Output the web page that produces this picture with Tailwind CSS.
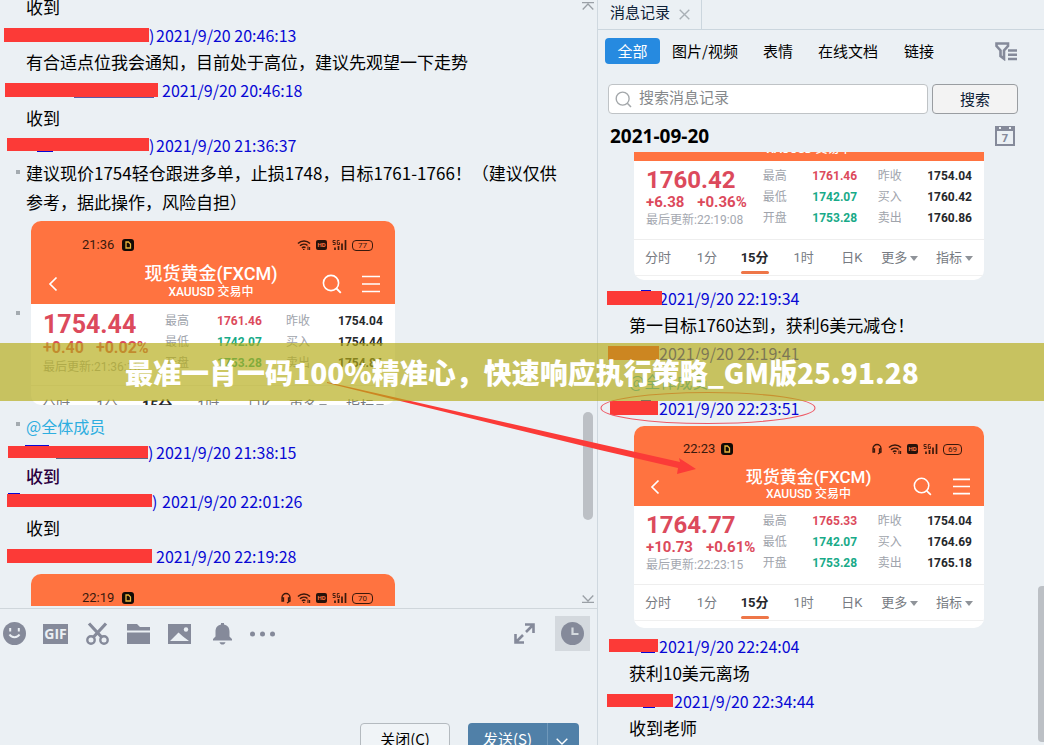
<!DOCTYPE html>
<html lang="zh-CN">
<head>
<meta charset="utf-8">
<meta name="viewport" content="width=device-width, initial-scale=1">
<title>消息记录</title>
<script src="https://cdn.jsdelivr.net/npm/@tailwindcss/browser@4"></script>
</head>
<body class="relative h-screen overflow-hidden bg-[#ebf0f4] font-['Noto_Sans_CJK_SC',sans-serif] text-black [text-spacing-trim:space-all]">

<svg class="hidden" aria-hidden="true">
  <symbol id="app" viewBox="0 0 12 12"><rect width="12" height="12" rx="3" fill="#120a05"/><path d="M4 3h2.500L8.500 5v4H4z" fill="none" stroke="#e8b43c" stroke-width="1.300"/></symbol>
  <symbol id="headset" viewBox="0 0 12 12"><path d="M2 9V5.500a4 4 0 0 1 8 0V9M2 6v3h1.500V6zM10 6v3H8.500V6zM9.500 9.500 7 11" fill="none" stroke="#3a190c" stroke-width="1.300"/></symbol>
  <symbol id="wifi" viewBox="0 0 14 12"><path d="M1 4.500a8.500 8.500 0 0 1 12 0M3 6.800a5.600 5.600 0 0 1 7.500-.3M5 9a3 3 0 0 1 3.500-.4" fill="none" stroke="#3a190c" stroke-width="1.600"/><path d="M6 10.500h1.500M11 7.500v3.500M12.600 8v3" stroke="#3a190c" stroke-width="1.100"/></symbol>
  <symbol id="signal" viewBox="0 0 15 12"><path d="M3 11V8.500M6.500 11V7M10 11V4.500M13.500 11V1" fill="none" stroke="#3a190c" stroke-width="1.700"/><path d="M3.500 1.500H1v2h2.200v2H.8M7.500 1.500H5.300v4h2.200V3.700H6.500" fill="none" stroke="#3a190c" stroke-width=".9"/></symbol>
  <symbol id="back" viewBox="0 0 10 16"><path d="M8.500 1.500 2 8l6.500 6.500" fill="none" stroke="#fff" stroke-width="1.700"/></symbol>
  <symbol id="find" viewBox="0 0 20 20"><circle cx="9" cy="9" r="7.600" fill="none" stroke="currentColor" stroke-width="1.600"/><path d="m14.500 14.500 4.300 4.300" stroke="currentColor" stroke-width="1.800"/></symbol>
  <symbol id="menu" viewBox="0 0 18 18"><path d="M0 1.500h18M0 9h18M0 16.500h18" stroke="#fff" stroke-width="1.700"/></symbol>
  <symbol id="caret" viewBox="0 0 8 5"><path d="M0 0h8L4 5z" fill="#8f9399"/></symbol>
</svg>

<div class="grid h-full grid-cols-[597fr_447fr]">

  <!-- Conversation -->
  <main class="flex h-screen min-w-0 flex-col overflow-hidden">
    <div class="flex min-h-0 flex-1 overflow-hidden border-b border-[#cfd6db]">
      <div class="mb-0.5 min-w-0 flex-1 overflow-hidden whitespace-nowrap text-[17px]">
        <p class="flex h-[21px] items-end pl-[26px] leading-[29px]">收到</p>

        <div class="flex h-[27px] items-center text-base text-[#0808d4]">
          <div class="flex w-[156px] shrink-0 items-center pl-1"><span class="h-3.5 w-[145px] bg-[#fc3a37]"></span><span>)</span></div><time>2021/9/20 20:46:13</time>
        </div>
        <p class="pl-[26px] leading-7">有合适点位我会通知，目前处于高位，建议先观望一下走势</p>

        <div class="flex h-7 items-center text-base text-[#0808d4]">
          <div class="flex w-[162px] shrink-0 items-center pl-[5px]"><span class="relative h-3.5 w-[153px] bg-[#fc3a37]"><i class="absolute top-full right-1 h-px w-20 bg-[#5a5aa8]"></i></span></div><time>2021/9/20 20:46:18</time>
        </div>
        <p class="pl-[26px] leading-[27px]">收到</p>

        <div class="flex h-[27px] items-center text-base text-[#0808d4]">
          <div class="flex w-[156px] shrink-0 items-center pl-[7px]"><span class="relative h-[13px] w-[142px] bg-[#fc3a37]"><i class="absolute top-full left-[30px] h-px w-4 bg-[#0808d4]"></i></span><span>)</span></div><time>2021/9/20 21:36:37</time>
        </div>
        <p class="relative pl-[26px] leading-[29px]"><i class="absolute top-3 left-4 size-1 bg-[#a4abb0]"></i>建议现价1754轻仓跟进多单，止损1748，目标1761-1766！（建议仅供<br>参考，据此操作，风险自担）</p>

        <!-- Quote card 21:36 -->
        <div class="relative mt-[5px] pl-[31px]">
          <i class="absolute top-[90px] left-4 size-1 bg-[#a4abb0]"></i>
          <article class="h-[184px] w-[364px] overflow-hidden rounded-[10px] bg-white font-[Roboto,'Noto_Sans_CJK_SC',sans-serif]">
            <header class="h-[83px] bg-[#ff7340] pt-4 text-white">
              <div class="flex h-4 items-center gap-[5px] pr-[22px] pl-[51px] text-[13px] text-[#3a190c]">
                <span class="mr-[3px]">21:36</span><svg class="size-3"><use href="#app"/></svg>
                <svg class="ml-auto h-3 w-3.5"><use href="#wifi"/></svg><b class="h-2.5 w-[11px] rounded-[2px] bg-[#26120a] text-center text-[6px] leading-[10px] text-[#ff7340]">HD</b><svg class="h-3 w-[15px]"><use href="#signal"/></svg><span class="rounded border border-[#3a190c] px-[5px] text-[8px] leading-[9px]">77</span>
              </div>
              <div class="flex items-center pt-2 pr-[15px] pl-[17px]">
                <svg class="mt-1.5 h-4 w-2.5"><use href="#back"/></svg>
                <div class="min-w-0 flex-1 pt-0.5 pl-[62px] text-center font-medium"><h3 class="text-lg leading-[22px]">现货黄金(FXCM)</h3><p class="text-xs leading-[15px]">XAUUSD 交易中</p></div>
                <svg class="mt-1.5 mr-5 ml-5 size-5"><use href="#find"/></svg><svg class="mt-1.5 h-[18px] w-[18px]"><use href="#menu"/></svg>
              </div>
            </header>
            <div class="grid h-[82px] grid-cols-[122fr_52fr_69fr_52fr_45fr] border-b border-[#eeeeee] px-3 pt-[7px]">
              <div class="text-[#dc4a5c]"><p class="text-[25px] leading-7 font-bold">1754.44</p><p class="flex gap-3 text-base leading-[18px] font-bold"><span>+0.40</span><span>+0.02%</span></p><p class="text-xs leading-5 text-[#a4a8b0]">最后更新:21:36:15</p></div>
              <div class="text-xs leading-[21px] text-[#a0a4ac]"><p>最高</p><p>最低</p><p>开盘</p></div>
              <div class="text-xs leading-[21px] font-bold text-[#18aa88]"><p class="text-[#dc4a5c]">1761.46</p><p>1742.07</p><p>1753.28</p></div>
              <div class="text-xs leading-[21px] text-[#a0a4ac]"><p>昨收</p><p>买入</p><p>卖出</p></div>
              <div class="text-xs leading-[21px] font-bold text-[#26282c]"><p>1754.04</p><p>1754.44</p><p>1754.86</p></div>
            </div>
            <div class="grid h-10 grid-cols-[52fr_44fr_53fr_48fr_40fr_43fr_48fr] px-[11px] text-sm leading-10 text-[#777b82]">
              <span>分时</span><span>1分</span><b class="text-[#26282c]">15分</b><span>1时</span><span>日K</span><span class="flex items-center gap-0.5">更多<svg class="h-[5px] w-2"><use href="#caret"/></svg></span><span class="flex items-center gap-0.5 pl-3">指标<svg class="h-[5px] w-2"><use href="#caret"/></svg></span>
            </div>
          </article>
        </div>

        <p class="relative mt-2 pl-[26px] text-base leading-[27px] text-[#2eaee0]"><i class="absolute top-[9px] left-4 size-1 bg-[#a4abb0]"></i>@全体成员</p>
        <div class="flex h-6 items-center text-base text-[#0808d4]">
          <div class="flex w-[156px] shrink-0 items-center pl-2"><span class="relative h-3 w-[140px] bg-[#fc3a37]"><i class="absolute bottom-full left-[17px] h-px w-6 bg-[#0808d4]"></i><i class="absolute top-full right-0 h-px w-[92px] bg-[#5a6a88]"></i></span><span>)</span></div><time>2021/9/20 21:38:15</time>
        </div>
        <p class="pl-[26px] leading-6 font-medium text-[#2b0040]">收到</p>
        <div class="flex h-[25px] items-center text-base text-[#0808d4]">
          <div class="flex w-[162px] shrink-0 items-center pl-[7px]"><span class="relative h-[13px] w-[145px] bg-[#fc3a37]"><i class="absolute bottom-full left-px h-px w-3 bg-[#0808d4]"></i></span><span>)</span></div><time>2021/9/20 22:01:26</time>
        </div>
        <p class="pl-[26px] leading-[29px]">收到</p>
        <div class="flex h-[27px] items-center text-base text-[#0808d4]">
          <div class="flex w-[156px] shrink-0 items-center pl-[7px]"><span class="h-3.5 w-[145px] bg-[#fc3a37]"></span></div><time>2021/9/20 22:19:28</time>
        </div>

        <!-- Quote card 22:19 -->
        <article class="mt-[5px] ml-[31px] h-[83px] w-[364px] rounded-t-[10px] bg-[#ff7340] pt-4 font-[Roboto,sans-serif]">
          <div class="flex h-4 items-center gap-[5px] pr-[22px] pl-[51px] text-[13px] text-[#3a190c]">
            <span class="mr-[3px]">22:19</span><svg class="size-3"><use href="#app"/></svg>
            <svg class="ml-auto size-3"><use href="#headset"/></svg><svg class="h-3 w-3.5"><use href="#wifi"/></svg><b class="h-2.5 w-[11px] rounded-[2px] bg-[#26120a] text-center text-[6px] leading-[10px] text-[#ff7340]">HD</b><svg class="h-3 w-[15px]"><use href="#signal"/></svg><span class="rounded border border-[#3a190c] px-[5px] text-[8px] leading-[9px]">70</span>
          </div>
        </article>
      </div>

      <div class="mr-[3px] flex w-3 shrink-0 flex-col items-center pt-0.5 pb-[5px]">
        <svg class="h-2 w-3 shrink-0" viewBox="0 0 12 8" fill="none" stroke="#9aa0a6" stroke-width="1.300"><path d="M0 .7h12M.7 7.500 6 2l5.300 5.500"/></svg>
        <div class="flex-[402]"></div>
        <div class="w-2.5 flex-[108] rounded-[5px] bg-[#bcc0c5]"></div>
        <div class="flex-[75]"></div>
        <svg class="h-2 w-3 shrink-0" viewBox="0 0 12 8" fill="none" stroke="#9aa0a6" stroke-width="1.300"><path d="M0 7.300h12M.7.500 6 6 11.300.5"/></svg>
      </div>
    </div>

    <div class="flex h-[136px] shrink-0 flex-col">
      <div class="flex items-center pt-[7px] pr-[7px] pl-[3px] text-[#858a9a]">
        <button aria-label="表情" class="mr-[17px]"><svg class="size-[23px]" viewBox="0 0 23 23"><circle cx="11.500" cy="11.500" r="11.500" fill="currentColor"/><path d="M7.200 6v3.500M15.800 6v3.500M6.500 12.500c2 3.500 8 3.500 10 0" fill="none" stroke="#ebf0f4" stroke-width="2"/></svg></button>
        <button aria-label="GIF" class="mr-[18px] h-5 w-[25px] bg-[#858a9a] font-['Liberation_Sans_Narrow','Open_Sans',sans-serif] text-[14px] leading-5 font-bold text-[#ebf0f4]">GIF</button>
        <button aria-label="截图" class="mr-[18px]"><svg class="size-[23px]" viewBox="0 0 23 23" fill="none" stroke="currentColor"><circle cx="5" cy="18" r="3.700" stroke-width="2.400"/><circle cx="18" cy="18" r="3.700" stroke-width="2.400"/><path d="M3 1.500 15.500 15M20 1.500 7.500 15" stroke-width="3.200"/></svg></button>
        <button aria-label="文件" class="mr-[18px]"><svg class="h-5 w-[23px]" viewBox="0 0 23 20" fill="currentColor"><path d="M0 0h10l3 3h10v3.500H0zM0 8.500h23V20H0z"/></svg></button>
        <button aria-label="图片" class="mr-[22px]"><svg class="h-5 w-[23px]" viewBox="0 0 23 20"><path d="M0 0h23v20H0z" fill="currentColor"/><path d="m2 17 8.500-8.500 4.500 4 6 4.500z" fill="#ebf0f4"/><circle cx="18" cy="5.500" r="2.200" fill="#ebf0f4"/></svg></button>
        <button aria-label="提醒" class="mr-[18px]"><svg class="h-[23px] w-[19px]" viewBox="0 0 19 23" fill="currentColor"><path d="M8 1h3v1.500c4 .8 5.500 3.500 5.500 7.500v4.500L19 17v1.500H0V17l2.500-2.500V10C2.500 6 4 3.300 8 2.500zM6.500 20.200h6c-.8 3.200-5.200 3.200-6 0z"/></svg></button>
        <button aria-label="更多"><svg class="h-1.5 w-[25px]" viewBox="0 0 25 6" fill="currentColor"><circle cx="2.500" cy="3" r="2.500"/><circle cx="12.500" cy="3" r="2.500"/><circle cx="22.500" cy="3" r="2.500"/></svg></button>
        <button aria-label="展开" class="mr-5 ml-auto"><svg class="size-[21px]" viewBox="0 0 21 21" fill="none" stroke="currentColor" stroke-width="2.600"><path d="M11 1.500h8.500V10M19.500 1.500 12 9M1.500 11v8.500H10M1.500 19.500 9 12"/></svg></button>
        <button aria-label="历史" class="flex size-[35px] items-center justify-center bg-[#d4d9de]"><svg class="size-[23px]" viewBox="0 0 23 23"><circle cx="11.500" cy="11.500" r="11.500" fill="currentColor"/><path d="M11.500 5.500V12h6" fill="none" stroke="#d4d9de" stroke-width="2.200"/></svg></button>
      </div>
      <div class="mt-[72px] flex justify-end gap-[18px] pr-[18px] text-[15px]">
        <button class="h-8 w-[90px] rounded-sm border border-[#b4babf] bg-[#f0f4f7]">关闭(C)</button>
        <button class="flex h-8 w-[111px] items-center rounded-sm bg-[#5080a8] text-white"><span class="flex-1 text-center">发送(S)</span><span class="flex w-8 items-center justify-center self-stretch border-l border-[#6f98ba] pr-1"><svg class="mt-1 h-[7px] w-3" viewBox="0 0 12 7" fill="none" stroke="#fff" stroke-width="1.400"><path d="m.7.700 5.300 5.300L11.300.7"/></svg></span></button>
      </div>
    </div>
  </main>

  <!-- Message history -->
  <aside class="flex h-screen min-w-0 flex-col overflow-hidden border-l border-[#cfd8df] whitespace-nowrap">
    <div class="flex h-[30px] shrink-0 border-b border-[#cbd6de] text-[15px]">
      <div class="flex w-[104px] items-center gap-[9px] border-r border-[#cbd6de] pl-3"><span class="pb-[5px] leading-6 text-[#0d2036]">消息记录</span><button aria-label="关闭"><svg class="size-[11px]" viewBox="0 0 11 11" stroke="#a9b0b6" stroke-width="1.400"><path d="m.7.700 9.600 9.600M10.300.7.700 10.300"/></svg></button></div>
    </div>
    <nav class="mt-2 flex h-[26px] shrink-0 items-center pr-[27px] pl-[7px] text-[15px]">
      <button class="mr-3 h-[26px] w-[55px] rounded-sm bg-[#268ae0] text-white">全部</button>
      <button class="mr-[25px]">图片/视频</button><button class="mr-[25px]">表情</button><button class="mr-[26px]">在线文档</button><button>链接</button>
      <button aria-label="筛选" class="ml-auto"><svg class="h-[19px] w-[22px]" viewBox="0 0 22 19" fill="none" stroke="#858a9a"><path d="M1.500 1.500h11.500V4L9 8.500v8.200L5.500 14V8.500L1.500 4z" stroke-width="2.600"/><path d="M13 8.500h9M13 12.700h9M13 17h9" stroke-width="2.400"/></svg></button>
    </nav>
    <form class="mt-5 mr-[26px] ml-2.5 flex h-[30px] shrink-0 gap-1 text-[15px]">
      <label class="flex min-w-0 flex-1 items-center gap-[7px] rounded-sm border border-[#bfc3c6] bg-white pl-1.5 text-[#a3a7aa]"><svg class="size-[17px] shrink-0"><use href="#find" width="17" height="17"/></svg><input type="text" aria-label="搜索消息记录" placeholder="搜索消息记录" class="min-w-0 flex-1 pb-1 text-black outline-none placeholder:text-[#85888b]"></label>
      <button type="button" class="w-[86px] rounded-sm border border-[#999da1] bg-[#f3f3f3] text-[#0d2036]">搜索</button>
    </form>
    <div class="mt-[7px] mb-px flex h-[30px] shrink-0 items-center justify-between pr-[29px] pl-3">
      <h2 class="font-['Open_Sans',sans-serif] text-[19px] leading-6 font-bold">2021-09-20</h2>
      <button aria-label="日历" class="relative flex h-5 w-5 items-end justify-center border-2 border-t-[5px] border-[#858a9a] font-['Open_Sans',sans-serif] text-[11px] leading-3 font-bold text-[#858a9a]">7<i class="absolute -top-1 left-0.5 size-0.5 bg-[#ebf0f4]"></i><i class="absolute -top-1 right-0.5 size-0.5 bg-[#ebf0f4]"></i></button>
    </div>

    <div class="relative min-h-0 flex-1 overflow-hidden pl-[9px] text-[17px]">
      <!-- Quote card 22:19, scrolled partly out of view -->
      <article class="ml-[27px] h-32 w-[350px] overflow-hidden rounded-b-[10px] bg-white font-[Roboto,'Noto_Sans_CJK_SC',sans-serif]">
        <header class="flex h-[9px] items-end justify-center overflow-hidden bg-[#ff7340] text-xs leading-[14px] font-medium text-white"><p class="pb-[5px]">XAUUSD 交易中</p></header>
        <div class="grid h-[79px] grid-cols-[118fr_50fr_66fr_50fr_42fr] border-b border-[#eeeeee] px-3 pt-[5px]">
          <div class="text-[#dc4a5c]"><p class="text-2xl leading-7 font-bold">1760.42</p><p class="flex gap-[13px] text-[15px] leading-4 font-bold"><span>+6.38</span><span>+0.36%</span></p><p class="text-xs leading-[21px] text-[#a4a8b0]">最后更新:22:19:08</p></div>
          <div class="text-xs leading-[21px] text-[#a0a4ac]"><p>最高</p><p>最低</p><p>开盘</p></div>
          <div class="text-xs leading-[21px] font-bold text-[#18aa88]"><p class="text-[#dc4a5c]">1761.46</p><p>1742.07</p><p>1753.28</p></div>
          <div class="text-xs leading-[21px] text-[#a0a4ac]"><p>昨收</p><p>买入</p><p>卖出</p></div>
          <div class="text-xs leading-[21px] font-bold text-[#26282c]"><p>1754.04</p><p>1760.42</p><p>1760.86</p></div>
        </div>
        <div class="grid h-9 grid-cols-[52fr_44fr_53fr_48fr_40fr_43fr_48fr] border-b border-[#f0f0f0] px-[11px] text-[13px] leading-9 text-[#777b82]">
          <span>分时</span><span>1分</span><b class="relative justify-self-start text-[#26282c]">15分<i class="absolute inset-x-0 bottom-0.5 h-[3px] rounded bg-[#ee7648]"></i></b><span>1时</span><span>日K</span><span class="flex items-center gap-[3px]">更多<svg class="h-[5px] w-2"><use href="#caret"/></svg></span><span class="flex items-center gap-[3px] pl-3">指标<svg class="h-[5px] w-2"><use href="#caret"/></svg></span>
        </div>
      </article>

      <div class="mt-1 flex h-[27px] items-center text-base text-[#0808d4]"><div class="w-[52px] shrink-0"><span class="relative block h-3.5 w-[55px] bg-[#fc3a37]"><i class="absolute bottom-full left-[34px] h-px w-2.5 bg-[#0808d4]"></i></span></div><time>2021/9/20 22:19:34</time></div>
      <p class="pl-[22px] leading-7">第一目标1760达到，获利6美元减仓！</p>
      <div class="flex h-7 items-center text-base text-[#0808d4]"><div class="w-[52px] shrink-0 pl-px"><span class="block h-3.5 w-[51px] bg-[#fc3a37]"></span></div><time>2021/9/20 22:19:41</time></div>
      <p class="pl-[22px] text-base leading-7 text-[#2eaee0]">@全体成员</p>
      <div class="flex h-[26px] items-center text-base text-[#0808d4]"><div class="w-[52px] shrink-0 pl-[3px]"><span class="relative block h-3.5 w-12 bg-[#fc3a37]"><i class="absolute bottom-full left-[31px] h-px w-2.5 bg-[#0808d4]"></i></span></div><time>2021/9/20 22:23:51</time></div>

      <!-- Quote card 22:23 -->
      <article class="mt-[5px] ml-[27px] h-[202px] w-[350px] overflow-hidden rounded-[10px] bg-white font-[Roboto,'Noto_Sans_CJK_SC',sans-serif]">
        <header class="h-20 bg-[#ff7340] pt-[15px] text-white">
          <div class="flex h-4 items-center gap-[5px] pr-[22px] pl-[49px] text-[13px] text-[#3a190c]">
            <span class="mr-px">22:23</span><svg class="size-3"><use href="#app"/></svg>
            <svg class="ml-auto size-3"><use href="#headset"/></svg><svg class="h-3 w-3.5"><use href="#wifi"/></svg><b class="h-2.5 w-[11px] rounded-[2px] bg-[#26120a] text-center text-[6px] leading-[10px] text-[#ff7340]">HD</b><svg class="h-3 w-[15px]"><use href="#signal"/></svg><span class="rounded border border-[#3a190c] px-1 text-[8px] leading-[9px]">69</span>
          </div>
          <div class="flex items-center pt-2 pr-3.5 pl-4">
            <svg class="mt-1.5 h-4 w-2.5"><use href="#back"/></svg>
            <div class="min-w-0 flex-1 pt-0.5 pl-[62px] text-center font-medium"><h3 class="text-[17px] leading-5">现货黄金(FXCM)</h3><p class="text-xs leading-[15px]">XAUUSD 交易中</p></div>
            <svg class="mt-1.5 mr-[21px] ml-[18px] size-[19px]"><use href="#find"/></svg><svg class="mt-1.5 h-[17px] w-[17px]"><use href="#menu"/></svg>
          </div>
        </header>
        <div class="grid h-[79px] grid-cols-[118fr_50fr_66fr_50fr_42fr] border-b border-[#eeeeee] px-3 pt-[5px]">
          <div class="text-[#dc4a5c]"><p class="text-2xl leading-7 font-bold">1764.77</p><p class="flex gap-[13px] text-[15px] leading-4 font-bold"><span>+10.73</span><span>+0.61%</span></p><p class="text-xs leading-[21px] text-[#a4a8b0]">最后更新:22:23:15</p></div>
          <div class="text-xs leading-[21px] text-[#a0a4ac]"><p>最高</p><p>最低</p><p>开盘</p></div>
          <div class="text-xs leading-[21px] font-bold text-[#18aa88]"><p class="text-[#dc4a5c]">1765.33</p><p>1742.07</p><p>1753.28</p></div>
          <div class="text-xs leading-[21px] text-[#a0a4ac]"><p>昨收</p><p>买入</p><p>卖出</p></div>
          <div class="text-xs leading-[21px] font-bold text-[#26282c]"><p>1754.04</p><p>1764.69</p><p>1765.18</p></div>
        </div>
        <div class="grid h-9 grid-cols-[52fr_44fr_53fr_48fr_40fr_43fr_48fr] border-b border-[#f0f0f0] px-[11px] text-[13px] leading-9 text-[#777b82]">
          <span>分时</span><span>1分</span><b class="relative justify-self-start text-[#26282c]">15分<i class="absolute inset-x-0 bottom-0.5 h-[3px] rounded bg-[#ee7648]"></i></b><span>1时</span><span>日K</span><span class="flex items-center gap-[3px]">更多<svg class="h-[5px] w-2"><use href="#caret"/></svg></span><span class="flex items-center gap-[3px] pl-3">指标<svg class="h-[5px] w-2"><use href="#caret"/></svg></span>
        </div>
      </article>

      <div class="mt-1 flex h-[27px] items-center text-base text-[#0808d4]"><div class="w-[52px] shrink-0 pl-0.5"><span class="relative block h-[13px] w-[49px] bg-[#fc3a37]"><i class="absolute top-full left-8 h-px w-3.5 bg-[#0808d4]"></i></span></div><time>2021/9/20 22:24:04</time></div>
      <p class="pl-[22px] leading-7">获利10美元离场</p>
      <div class="flex h-[27px] items-center text-base text-[#0808d4]"><div class="w-[67px] shrink-0"><span class="relative block h-[13px] w-[66px] bg-[#fc3a37]"><i class="absolute top-full left-9 h-px w-3 bg-[#0808d4]"></i></span></div><time>2021/9/20 22:34:44</time></div>
      <p class="pl-[22px] leading-7">收到老师</p>
      <div class="absolute right-0 bottom-[3px] h-[156px] w-1.5 rounded-l bg-[#bcc0c5]"></div>
    </div>
  </aside>
</div>

<!-- Annotations over the conversation -->
<svg class="pointer-events-none absolute top-0 left-0" width="1044" height="745" viewBox="0 0 1044 745" aria-hidden="true">
  <path d="M327 382 600 444 680 462 679 458 696 469 677 474 678 468 600 450 327 383Z" fill="#fb3b38"/>
  <ellipse cx="708" cy="408" rx="107" ry="15.500" fill="none" stroke="#ee5a66" stroke-width="1.100"/>
</svg>
<div class="absolute inset-x-0 top-[343px] flex h-[58px] items-center justify-center bg-[#b4ab16]/67">
  <h1 class="text-[28px] leading-none font-black whitespace-nowrap text-white">最准一肖一码100%精准心，快速响应执行策略_GM版25.91.28</h1>
</div>
</body>
</html>
